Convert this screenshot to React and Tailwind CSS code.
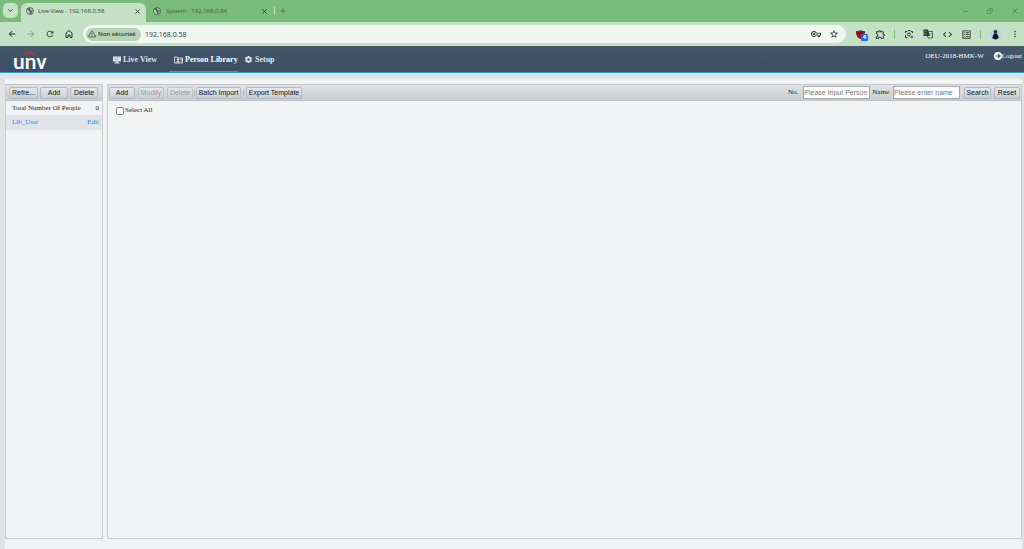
import React from 'react';
import { TriangleAlert, ChevronDown, X, Plus, Minus, Copy } from 'lucide-react';
import { MdArrowBack, MdArrowForward, MdRefresh, MdStarBorder, MdOutlineExtension, MdCode, MdGTranslate, MdMoreVert, MdOutlineVpnKey, MdOutlineListAlt, MdSettings } from 'react-icons/md';

const toolButton = "h-[12px] shrink-0 rounded-[2px] border border-[#b4b9bf] bg-linear-to-b from-[#e4e8eb] to-[#cbd0d5] text-center font-['Liberation_Sans',sans-serif] text-[7px] leading-[10px] whitespace-nowrap text-[#111] disabled:border-[#bfc3c8] disabled:text-[#96999c]";
const searchInput = "h-[13px] w-[67px] border border-[#a5a8ab] bg-white font-['Liberation_Sans',sans-serif] text-[7px] text-[#222] outline-none placeholder:text-[#777]";

function Globe() {
  return (
    <svg viewBox="0 0 16 16" className="size-2 shrink-0">
      <circle cx="8" cy="8" r="7.5" fill="#4c5f50" />
      <path d="M2 6c2-1 4 0 4 2s2 1 2 3-1 2-1 3C4 14 1 11 2 6zM8 2c3 0 5 2 6 4-1 2-3 1-4 0S7 5 8 2zM11 9l3 0c0 2-1 4-3 4z" fill="#b9d6b9" />
    </svg>
  )
}

function Logo() {
  return (
    <svg viewBox="0 0 40 28" className="h-7 w-10" role="img" aria-label="unv">
      <path d="M10 5Q16 -1 23 5Q16 1 10 5z" fill="#e02a2a" stroke="#e02a2a" strokeWidth="0.6" />
      <text x="0" y="19" fill="#fff" className="font-[Roboto,sans-serif] text-[21px] font-medium">unv</text>
    </svg>
  )
}

function TabStrip() {
  return (
    <div className="flex h-[22px] items-end bg-[#7aba7b] font-['Open_Sans',sans-serif] text-[6px] text-[#2d3a2f]">
      <button aria-label="Search tabs" className="mb-1 ml-[3px] flex size-[15px] items-center justify-center rounded-[5px] bg-[#c5e1c5]">
        <ChevronDown size={7} strokeWidth={3} />
      </button>
      <div className="ml-[3px] flex h-[19px] w-[125px] items-center rounded-t-[6px] bg-[#c5e1c5] px-[5px] pb-[3px]">
        <Globe />
        <span className="ml-1 flex-1 whitespace-nowrap">Live View - 192.168.0.58</span>
        <button aria-label="Close tab"><X size={7} strokeWidth={3} /></button>
      </div>
      <div className="flex h-[19px] w-[127px] items-center pr-[5px] pb-[3px] pl-[7px]">
        <Globe />
        <span className="ml-[5px] flex-1 whitespace-nowrap text-[#3c5d3f]">System - 192.168.0.84</span>
        <button aria-label="Close tab"><X size={7} strokeWidth={3} /></button>
      </div>
      <span className="mb-[7px] ml-px h-2 w-px bg-[#c5e1c5]"></span>
      <button aria-label="New tab" className="mb-[7px] ml-1 text-[#3c6b41]"><Plus size={8} strokeWidth={2} /></button>
      <div className="mr-[5px] mb-[7px] ml-auto flex items-center gap-[18px] text-[#44764a]">
        <button aria-label="Minimize"><Minus size={7} /></button>
        <button aria-label="Restore"><Copy size={6} className="-scale-x-100" /></button>
        <button aria-label="Close"><X size={8} /></button>
      </div>
    </div>
  )
}

function AddressBar() {
  return (
    <div className="flex h-6 items-center bg-[#c5e1c5] pr-[4px] pl-[7px] font-['Open_Sans',sans-serif] text-[#2b352c]">
      <div className="flex gap-[9px]">
        <button aria-label="Back"><MdArrowBack size={10} /></button>
        <button aria-label="Forward" className="text-[#86a588]"><MdArrowForward size={10} /></button>
        <button aria-label="Reload"><MdRefresh size={10} /></button>
        <button aria-label="Home">
          <svg viewBox="0 0 20 20" className="size-[10px]" fill="none" stroke="currentColor" strokeWidth="2">
            <path d="M4 17V8l6-5 6 5v9h-4v-5H8v5z" />
          </svg>
        </button>
      </div>
      <div className="ml-[9px] flex h-[18px] min-w-0 flex-1 items-center rounded-full bg-[#f0f7f0] pr-[7px] pl-[3px]">
        <button className="flex h-[13px] w-[55px] shrink-0 items-center gap-[2px] rounded-full bg-[#b7d3b7] pl-[2px] text-[6px] font-semibold whitespace-nowrap">
          <TriangleAlert size={8} strokeWidth={2} className="shrink-0" />
          Non sécurisé
        </button>
        <input aria-label="Address" defaultValue="192.168.0.58" className="ml-1 min-w-0 flex-1 text-[7px] outline-none" />
        <button aria-label="Passwords"><MdOutlineVpnKey size={10} /></button>
        <button aria-label="Bookmark" className="ml-2"><MdStarBorder size={10} /></button>
      </div>
      <div className="ml-[10px] flex items-center">
        <button aria-label="Ad blocker" className="relative">
          <svg viewBox="0 0 16 16" className="size-[9px]"><path d="M8 0c2 2 5 2 8 2 0 7-2 11-8 14C2 13 0 9 0 2c3 0 6 0 8-2z" fill="#8e1018" /></svg>
          <span className="absolute top-1 left-[5px] flex size-[7px] items-center justify-center rounded-[1px] bg-[#1a73e8] text-[6px] font-bold text-white">4</span>
        </button>
        <button aria-label="Extensions" className="ml-[10px]"><MdOutlineExtension size={11} /></button>
        <span className="ml-2 h-[9px] w-px bg-[#7aba7b]"></span>
        <button aria-label="Search with lens" className="ml-[9px]">
          <svg viewBox="0 0 20 20" className="size-[10px]" fill="none" stroke="currentColor" strokeWidth="2">
            <path d="M3 8V5h3l2-2h4l2 2h3v3M3 12v5h4M13 17h1" />
            <circle cx="10" cy="11" r="3" />
            <circle cx="16" cy="16" r="1" fill="currentColor" />
          </svg>
        </button>
        <button aria-label="Translate" className="ml-[9px]">
          <svg viewBox="0 0 20 20" className="size-[10px]">
            <path d="M1 1h9l4 13H1z" fill="currentColor" />
            <path d="M11 5h8v13h-9l-1-4" fill="none" stroke="currentColor" strokeWidth="1.5" />
            <path d="M8 6a3 3 0 1 0 0 3H6M13 9h5M15 8v1c0 3-1 4-2 5M13 10l4 4" fill="none" stroke="#8fa590" strokeWidth="1.3" />
          </svg>
        </button>
        <button aria-label="Source" className="ml-[9px]"><MdCode size={11} /></button>
        <button aria-label="Reader" className="ml-2"><MdOutlineListAlt size={11} /></button>
        <span className="ml-2 h-[9px] w-px bg-[#7aba7b]"></span>
        <button aria-label="Profile" className="ml-[9px]">
          <svg viewBox="0 0 20 20" className="size-[11px]">
            <circle cx="10" cy="10" r="10" fill="#b7cfe2" />
            <circle cx="10" cy="5" r="3" fill="#20242e" />
            <path d="M7 8h6l3 8q-6 6-12 0z" fill="#111622" />
          </svg>
        </button>
        <button aria-label="Menu" className="ml-[9px]"><MdMoreVert size={10} /></button>
      </div>
    </div>
  )
}

function Header() {
  return (
    <header className="flex h-[27px] items-stretch border-b border-[#2ba0cf] bg-linear-to-b from-[#43576b] to-[#3f4e61] pr-[2px] pl-[13px] text-[#dfe4e9]">
      <div className="w-[96px] pt-1"><Logo /></div>
      <nav className="-mb-px flex text-[8px] font-bold whitespace-nowrap">
        <a href="#live" className="flex w-[60px] items-center gap-[2px] pl-1">
          <svg viewBox="0 0 16 16" className="size-2 shrink-0">
            <path d="M0 1h16v10H0z" fill="#dfe4e9" />
            <path d="M3 4h10M3 7h7" stroke="#8796a5" strokeWidth="1" />
            <path d="M6 11h4v2h3v2H3v-2h3z" fill="#dfe4e9" />
          </svg>
          Live View
        </a>
        <a href="#library" className="flex w-[69px] items-center gap-[2px] border-b-2 border-[#2ba0cf] pt-[2px] pl-[5px] text-white">
          <svg viewBox="0 0 18 16" className="h-2 w-[9px] shrink-0" fill="none" stroke="#fff" strokeWidth="1.5">
            <path d="M1 14V2h5l1 2h10v10z" />
            <circle cx="8" cy="7" r="1.5" fill="#fff" />
            <path d="M5 12q3-4 6 0zM13 7h3M13 10h3" />
          </svg>
          Person Library
        </a>
        <a href="#setup" className="ml-[6px] flex items-center gap-[2px]">
          <MdSettings size={9} className="shrink-0" />
          Setup
        </a>
      </nav>
      <div className="ml-auto flex items-center gap-[10px] pb-[6px] text-[7px] whitespace-nowrap text-white">
        <span>OEU-2018-HMK-W</span>
        <a href="#logout" className="flex items-center">
          <svg viewBox="0 0 16 16" className="size-2">
            <circle cx="8" cy="8" r="8" fill="#fff" />
            <path d="M3 8h8M8 4l4 4-4 4" fill="none" stroke="#43566a" strokeWidth="2.4" />
          </svg>
          Logout
        </a>
      </div>
    </header>
  )
}

function Toolbar({ className, children }) {
  return (
    <div className={"flex h-[17px] shrink-0 items-center border-y border-[#c0c4c8] bg-linear-to-b from-[#dfe3e6] to-[#c8cdd2] " + className}>
      {children}
    </div>
  )
}

function Sidebar() {
  return (
    <aside className="flex w-[98px] shrink-0 flex-col border-x border-b border-[#cacccf]">
      <Toolbar className="gap-[2px] px-[3px]">
        <button className={toolButton + " w-[29px]"}>Refre...</button>
        <button className={toolButton + " w-[28px]"}>Add</button>
        <button className={toolButton + " w-[28px]"}>Delete</button>
      </Toolbar>
      <div className="flex h-[14px] items-center justify-between pr-[3px] pl-[6px]">
        <span>Total Number Of People</span>
        <span>0</span>
      </div>
      <div className="flex h-[15px] items-center justify-between bg-[#e1e4e7] pr-[3px] pl-[6px] text-[#2383ea]">
        <a href="#lib-user">Lib_User</a>
        <a href="#edit">Edit</a>
      </div>
    </aside>
  )
}

function People() {
  return (
    <main className="flex min-w-0 flex-1 flex-col border-x border-b border-[#cacccf]">
      <Toolbar className="px-px">
        <button className={toolButton + " w-[26px]"}>Add</button>
        <button className={toolButton + " ml-[3px] w-[26px]"} disabled>Modify</button>
        <button className={toolButton + " ml-[3px] w-[26px]"} disabled>Delete</button>
        <span className="mx-px h-[6px] w-px bg-[#b0b5ba]"></span>
        <button className={toolButton + " w-[45px]"}>Batch Import</button>
        <span className="mx-[2px] h-[6px] w-px bg-[#b0b5ba]"></span>
        <button className={toolButton + " w-[56px]"}>Export Template</button>
        <div className="ml-auto flex items-center">
          <label htmlFor="no" className="mr-[5px]">No.</label>
          <input id="no" type="text" placeholder="Please Input Person" className={searchInput} />
          <label htmlFor="name" className="mr-1 ml-[2px]">Name</label>
          <input id="name" type="text" placeholder="Please enter name" className={searchInput} />
          <button className={toolButton + " ml-1 w-[27px]"}>Search</button>
          <button className={toolButton + " ml-[3px] w-[26px]"}>Reset</button>
        </div>
      </Toolbar>
      <label className="flex items-center gap-px pt-[5px] pl-[8px]">
        <input type="checkbox" className="size-2 appearance-none rounded-[2px] border border-[#858585] bg-white checked:bg-[#2383ea]" />
        Select All
      </label>
    </main>
  )
}

export default function App() {
  return (
    <div className="flex min-h-screen flex-col bg-[#e1e2e4] font-['Liberation_Serif',serif] text-[7px] leading-[9px] text-[#222]">
      <TabStrip />
      <AddressBar />
      <Header />
      <div className="mt-[6px] mr-[2px] ml-[5px] flex flex-1 gap-1 bg-[#f2f3f5] pt-[5px] pb-[10px]">
        <Sidebar />
        <People />
      </div>
    </div>
  )
}
